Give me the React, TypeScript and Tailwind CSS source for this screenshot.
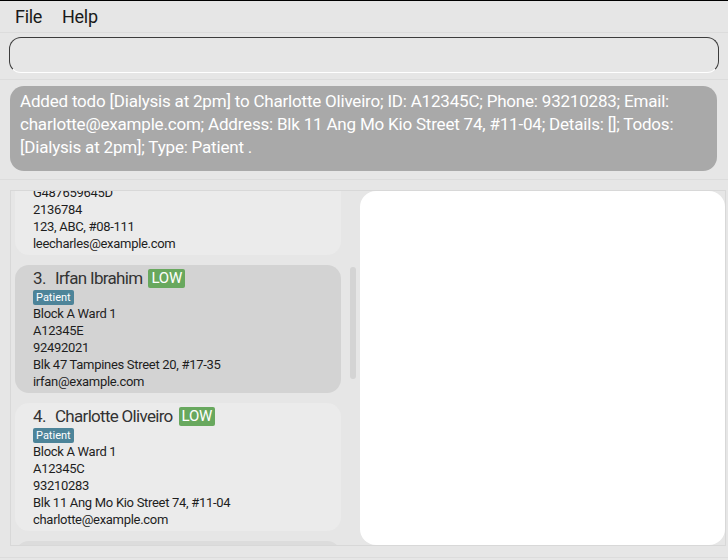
import React from 'react';

type Person = {
  index: number;
  name: string;
  ward: string;
  id: string;
  phone: string;
  address: string;
  email: string;
};

const people: Person[] = [
  { index: 3, name: 'Irfan Ibrahim', ward: 'Block A Ward 1', id: 'A12345E', phone: '92492021', address: 'Blk 47 Tampines Street 20, #17-35', email: 'irfan@example.com' },
  { index: 4, name: 'Charlotte Oliveiro', ward: 'Block A Ward 1', id: 'A12345C', phone: '93210283', address: 'Blk 11 Ang Mo Kio Street 74, #11-04', email: 'charlotte@example.com' },
];

const font = { fontFamily: 'Roboto, "Liberation Sans", sans-serif' };

const PersonCard: React.FC<{ p: Person; selected?: boolean }> = ({ p, selected }) => (
  <div className={`rounded-[14px] pl-[18px] pt-[3px] pb-[3px] ${selected ? 'bg-[#d3d3d3]' : 'bg-[#ebebeb]'}`}>
    <div className="flex items-center h-[21px]">
      <span className="text-[17px] text-[#333] tracking-[-0.6px] w-[22px]">{p.index}.</span>
      <span className="text-[17px] text-[#333] tracking-[-0.7px]">{p.name}</span>
      <span className="ml-[6px] bg-[#68a85e] text-white text-[15px] leading-[19px] px-[3px] rounded-[2px] tracking-[-0.2px]">LOW</span>
    </div>
    <div className="flex mt-[1px] h-[15px]">
      <span className="bg-[#4d8499] text-white text-[11px] leading-[15px] px-[3px] rounded-[2px]">Patient</span>
    </div>
    <div className="text-[13px] leading-[17px] text-[#1e1e1e] tracking-[-0.3px]">
      <div>{p.ward}</div>
      <div>{p.id}</div>
      <div>{p.phone}</div>
      <div>{p.address}</div>
      <div>{p.email}</div>
    </div>
  </div>
);

export default function App() {
  return (
    <div className="w-[728px] h-[560px] bg-[#e6e6e6] border-t border-black flex flex-col overflow-hidden" style={font}>
      {/* menu */}
      <div className="h-[32px] flex items-center gap-[20px] pl-[15px] text-[18px] text-[#1a1a1a] border-b border-[#dcdcdc] tracking-[-0.3px]">
        <span>File</span>
        <span>Help</span>
      </div>

      {/* command box */}
      <div className="h-[47px] px-[9px] pt-[4px] border-b border-[#dcdcdc]">
        <div className="h-[36px] w-[710px] rounded-[12px] border border-t-[#3c3c3c] border-l-[#3c3c3c] border-r-[#3c3c3c] border-b-white bg-[#e6e6e6]" />
      </div>

      {/* result box */}
      <div className="h-[100px] px-[10px] pt-[6px] border-b border-[#dcdcdc]">
        <div className="h-[85px] w-[707px] rounded-[14px] bg-[#a9a9a9] text-white text-[17px] leading-[23px] tracking-[-0.2px] px-[10px] pt-[4px]">
          Added todo [Dialysis at 2pm] to Charlotte Oliveiro; ID: A12345C; Phone: 93210283; Email: charlotte@example.com; Address: Blk 11 Ang Mo Kio Street 74, #11-04; Details: []; Todos: [Dialysis at 2pm]; Type: Patient .
        </div>
      </div>

      {/* main */}
      <div className="flex-1 pl-[10px] pr-[2px] pt-[10px] pb-[10px] border-b border-[#dcdcdc]">
        <div className="h-[356px] border border-[#d8d8d8] flex">
          <div className="w-[349px] flex overflow-hidden">
            <div className="w-[330px] pl-[4px] flex flex-col gap-[10px] -mt-[64px]">
              <div className="rounded-[14px] bg-[#ebebeb] pl-[18px] pt-[3px] pb-[3px] text-[13px] leading-[17px] text-[#1e1e1e] tracking-[-0.3px]">
                <div className="h-[21px]" />
                <div className="h-[16px]" />
                <div>Block B Ward 2</div>
                <div>G487659645D</div>
                <div>2136784</div>
                <div>123, ABC, #08-111</div>
                <div>leecharles@example.com</div>
              </div>
              <PersonCard p={people[0]} selected />
              <PersonCard p={people[1]} />
              <div className="rounded-[14px] bg-[#dcdcdc] h-[60px] shrink-0" />
            </div>
            <div className="ml-[9px] pt-[76px]">
              <div className="w-[6px] h-[112px] rounded-full bg-[#d4d4d4]" />
            </div>
          </div>
          <div className="flex-1 bg-white rounded-[16px]" />
        </div>
      </div>
      <div className="h-[2px]" />
    </div>
  );
}
